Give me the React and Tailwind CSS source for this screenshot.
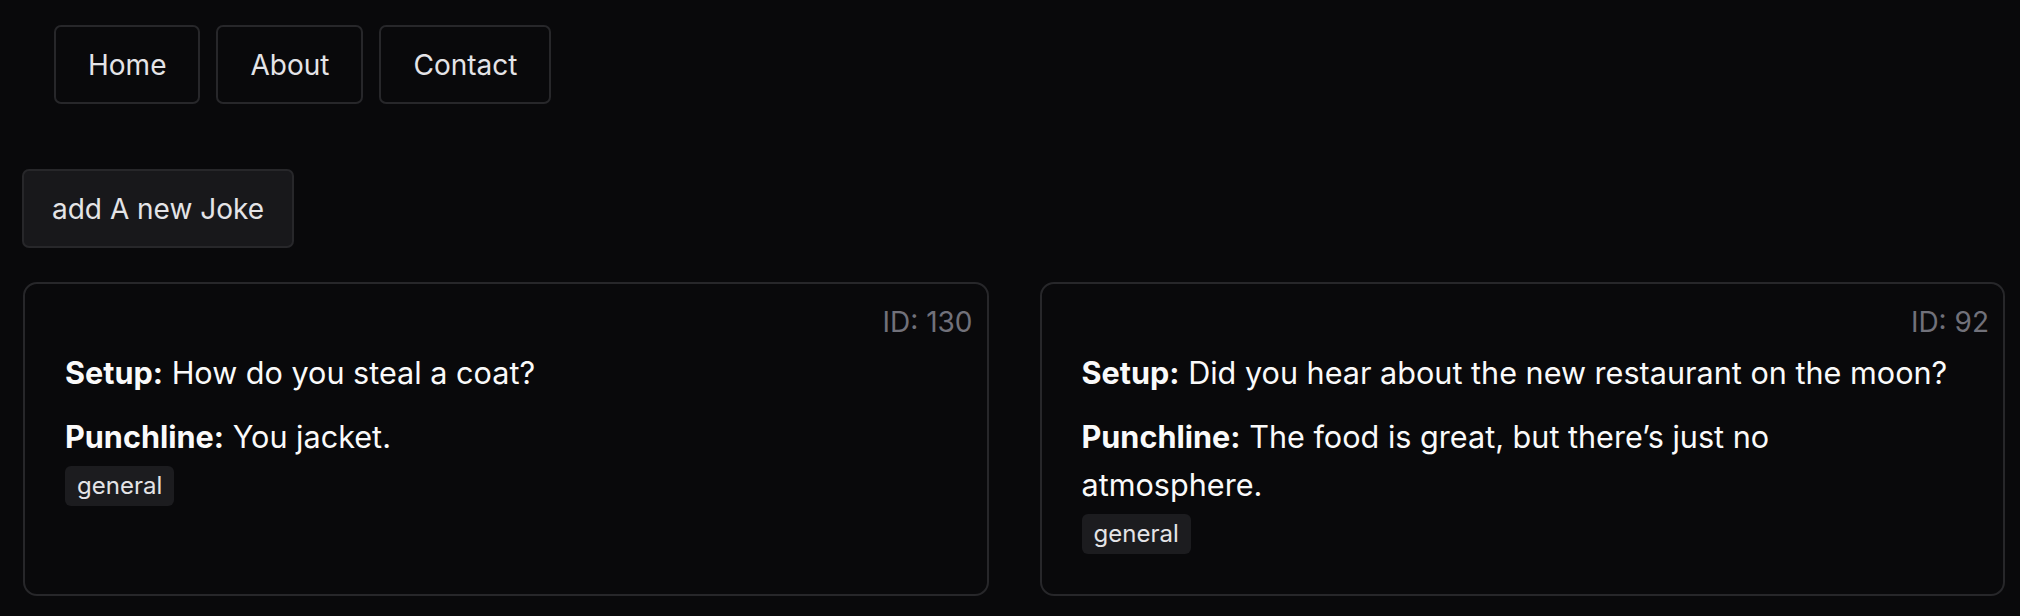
export default function App() {
  const jokes = [
    { id: 130, setup: "How do you steal a coat?", punchline: "You jacket.", type: "general" },
    { id: 92, setup: "Did you hear about the new restaurant on the moon?", punchline: "The food is great, but there\u2019s just no atmosphere.", type: "general" },
  ];
  return (
    <div className="min-h-[616px] bg-[#09090b] text-[#fafafa] font-['Inter',sans-serif]">
      <nav className="flex gap-[16px] pl-[54px] pt-[25px]">
        {["Home", "About", "Contact"].map((n) => (
          <button key={n} className="h-[79px] px-[32px] border-2 border-[#27272a] rounded-[7px] text-[28px] text-[#e4e4e7] bg-transparent">
            {n}
          </button>
        ))}
      </nav>
      <div className="pl-[22px] pt-[65px]">
        <button className="h-[79px] px-[28px] border-2 border-[#27272a] rounded-[7px] text-[28px] text-[#e4e4e7] bg-[#18181b]">
          add A new Joke
        </button>
      </div>
      <div className="grid grid-cols-2 gap-[51px] pl-[23px] pr-[15px] pt-[34px]">
        {jokes.map((j) => (
          <div key={j.id} className="border-2 border-[#27272a] rounded-[14px] pl-[40px] pr-[54px] pt-[14px] pb-[40px]">
            <div className="text-right mr-[-40px] text-[28px] leading-[48px] text-[#71717a]">ID: {j.id}</div>
            <p className="mt-[3px] text-[30.6px] leading-[48px]">
              <span className="font-bold">Setup:</span> {j.setup}
            </p>
            <p className="mt-[16px] text-[30.6px] leading-[48px]">
              <span className="font-bold">Punchline:</span> {j.punchline}
            </p>
            <span className="inline-block mt-[5px] px-[12px] h-[40px] leading-[40px] rounded-[6px] bg-[#1c1c1f] text-[24px] text-[#e4e4e7]">
              {j.type}
            </span>
          </div>
        ))}
      </div>
    </div>
  );
}
